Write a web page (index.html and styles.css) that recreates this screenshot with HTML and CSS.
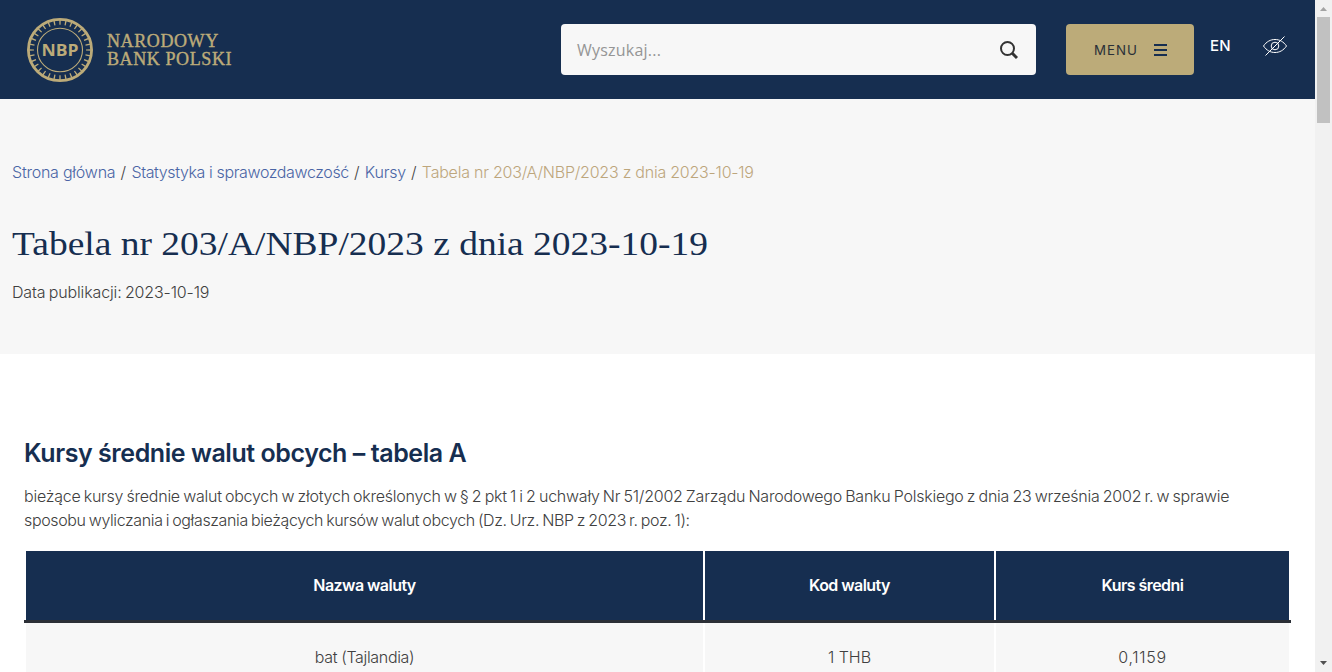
FILE: index.html
```html
<!DOCTYPE html>
<html lang="pl">
<head>
<meta charset="utf-8">
<title>Tabela nr 203/A/NBP/2023 z dnia 2023-10-19</title>
<link rel="stylesheet" href="styles.css">
</head>
<body>
<div class="page">
  <header class="header">
    <a class="logo">
      <svg class="logo-mark" viewBox="0 0 66 66" width="66" height="64" preserveAspectRatio="none">
        <g fill="none" stroke="#bcab79">
          <circle cx="33" cy="33" r="31.6" stroke-width="2.800"/>
          <circle cx="33" cy="33" r="28.500" stroke-width="5" pathLength="160" stroke-dasharray="1.2 3.800" stroke-dashoffset=".6"/>
          <circle cx="33" cy="33" r="22.500" stroke-width="1.100"/>
        </g>
        <text class="logo-initials" x="33" y="39" text-anchor="middle" textLength="37" lengthAdjust="spacingAndGlyphs">NBP</text>
      </svg>
      <span class="logo-name"><span>NARODOWY</span><span>BANK POLSKI</span></span>
    </a>
    <div class="search">
      <span class="search-hint">Wyszukaj...</span>
      <svg width="20" height="20" viewBox="0 0 20 20" fill="none" stroke="#333"><circle cx="8.500" cy="8.500" r="6.500" stroke-width="2"/><path d="M13 13l5 5" stroke-width="3"/></svg>
    </div>
    <a class="menu"><span class="menu-label">MENU</span>
      <svg width="13" height="12" viewBox="0 0 13 12" fill="#162e50"><path d="M0 0h13v2H0zM0 5h13v2H0zM0 10h13v2H0z"/></svg>
    </a>
    <a class="lang">EN</a>
    <svg class="eye" width="26" height="22" viewBox="0 0 26 22" fill="none" stroke="#fff"><path d="M1.500 11C4.500 6.600 8.500 4.500 13 4.500s8.500 2.100 11.500 6.500c-3 4.400-7 6.500-11.500 6.500S4.500 15.400 1.500 11z"/><circle cx="13" cy="11" r="3.800"/><path d="M3.500 20.500L22.500 1.500"/></svg>
  </header>
  <section class="hero">
    <nav class="crumbs"><a class="crumb">Strona główna</a><i>/</i><a class="crumb crumb-long">Statystyka i sprawozdawczość</a><i>/</i><a class="crumb">Kursy</a><i>/</i><span class="crumb current">Tabela nr 203/A/NBP/2023 z dnia 2023-10-19</span></nav>
    <h1><span class="title">Tabela nr 203/A/NBP/2023 z dnia 2023-10-19</span></h1>
    <p class="date">Data publikacji: 2023-10-19</p>
  </section>
  <main class="content">
    <h2>Kursy średnie walut obcych – tabela A</h2>
    <p class="intro"><span class="line-first">bieżące kursy średnie walut obcych w złotych określonych w § 2 pkt 1 i 2 uchwały Nr 51/2002 Zarządu Narodowego Banku Polskiego z dnia 23 września 2002 r. w sprawie</span><br><span class="line-last">sposobu wyliczania i ogłaszania bieżących kursów walut obcych (Dz. Urz. NBP z 2023 r. poz. 1):</span></p>
    <div class="rates">
      <div class="row head"><div>Nazwa waluty</div><div>Kod waluty</div><div>Kurs średni</div></div>
      <div class="row"><div class="name">bat (Tajlandia)</div><div>1 THB</div><div class="rate">0,1159</div></div>
    </div>
  </main>
</div>
<aside class="scrollbar">
  <svg width="17" height="17" viewBox="0 0 17 17"><path d="M5 11l3.500-4 3.500 4z" fill="#a3a3a3"/></svg>
  <div class="thumb"></div>
  <svg width="17" height="17" viewBox="0 0 17 17"><path d="M5 6l3.500 4L12 6z" fill="#505050"/></svg>
</aside>
</body>
</html>
```
FILE: styles.css
```css
* { box-sizing: border-box; }
body {
  margin: 0;
  width: 1332px;
  height: 672px;
  overflow: hidden;
  display: flex;
  font: 300 16px/24px Inter, "Liberation Sans", sans-serif;
  color: #404040;
  background: #fff;
}
.page { width: 1315px; height: 672px; overflow: hidden; }
.header {
  height: 99px;
  background: #162e50;
  display: flex;
  align-items: flex-start;
  padding-top: 24px;
}
.logo { display: flex; width: 534px; margin: -6px 0 0 27px; }
.logo-initials { font: 700 17px "Open Sans", sans-serif; fill: #bcab79; }
.logo-name {
  display: flex;
  flex-direction: column;
  align-items: flex-start;
  margin: 14px 0 0 14px;
  font: 400 18px/18px "Liberation Serif", serif;
  letter-spacing: .6px;
  white-space: nowrap;
  color: #bcab79;
  -webkit-text-stroke: .4px #bcab79;
}
.search {
  width: 475px;
  height: 51px;
  border-radius: 4px;
  background: #f7f7f7;
  display: flex;
  align-items: center;
  justify-content: space-between;
  padding: 0 17px 0 16px;
}
.search-hint { font: 400 16px "Open Sans", sans-serif; letter-spacing: .22px; color: #959595; }
.menu {
  width: 128px;
  height: 51px;
  margin-left: 30px;
  border-radius: 4px;
  background: #bcab79;
  display: flex;
  align-items: center;
  justify-content: space-between;
  padding: 0 27px 0 28px;
}
.menu-label { font: 400 13.3px Inter, sans-serif; letter-spacing: 1px; color: #2a3038; }
.lang { margin: 11px 0 0 16px; font: 500 15px/22px Inter, sans-serif; letter-spacing: .2px; color: #fff; }
.eye { margin: 11px 0 0 31px; }
.hero { height: 255px; background: #f7f7f7; padding: 61px 12px 0; }
.crumbs { display: flex; color: #444; white-space: nowrap; }
.crumb { letter-spacing: -.23px; color: #4a65a5; }
.crumb-long { letter-spacing: -.375px; }
.crumb.current { color: #bda67c; }
.crumbs i { font-style: normal; width: 16px; text-align: center; }
h1 { margin: 40px 0 0; font: 400 33.5px/40px "Liberation Serif", serif; color: #162e50; white-space: nowrap; }
.title { display: inline-block; transform: scaleX(1.119); transform-origin: left; }
.date { margin: 16px 0 0; letter-spacing: -.14px; word-spacing: -1px; }
.content { padding: 83px 24px 0; }
h2 { margin: 0; font-size: 25px; line-height: 32px; font-weight: 600; letter-spacing: -.44px; color: #162e50; }
.intro { margin: 15px 0 19px; white-space: nowrap; word-spacing: -1px; }
.line-first { letter-spacing: -.24px; }
.line-last { letter-spacing: -.37px; }
.rates { width: 1267px; }
.row { display: grid; grid-template-columns: 677px 289px 293px; gap: 2px; padding-left: 2px; height: 70px; }
.row > div { background: #f7f7f7; display: flex; align-items: center; justify-content: center; padding-bottom: 2px; }
.head { height: 72px; border-bottom: 3px solid #2b2f36; font-weight: 600; letter-spacing: -.55px; color: #fff; }
.head > div { background: #162e50; }
.name { letter-spacing: -.34px; }
.rate { letter-spacing: .7px; }
.scrollbar { width: 17px; height: 672px; background: #f1f1f1; display: flex; flex-direction: column; }
.thumb { width: 13px; height: 106px; margin: 0 2px auto; background: #c1c1c1; }
```
